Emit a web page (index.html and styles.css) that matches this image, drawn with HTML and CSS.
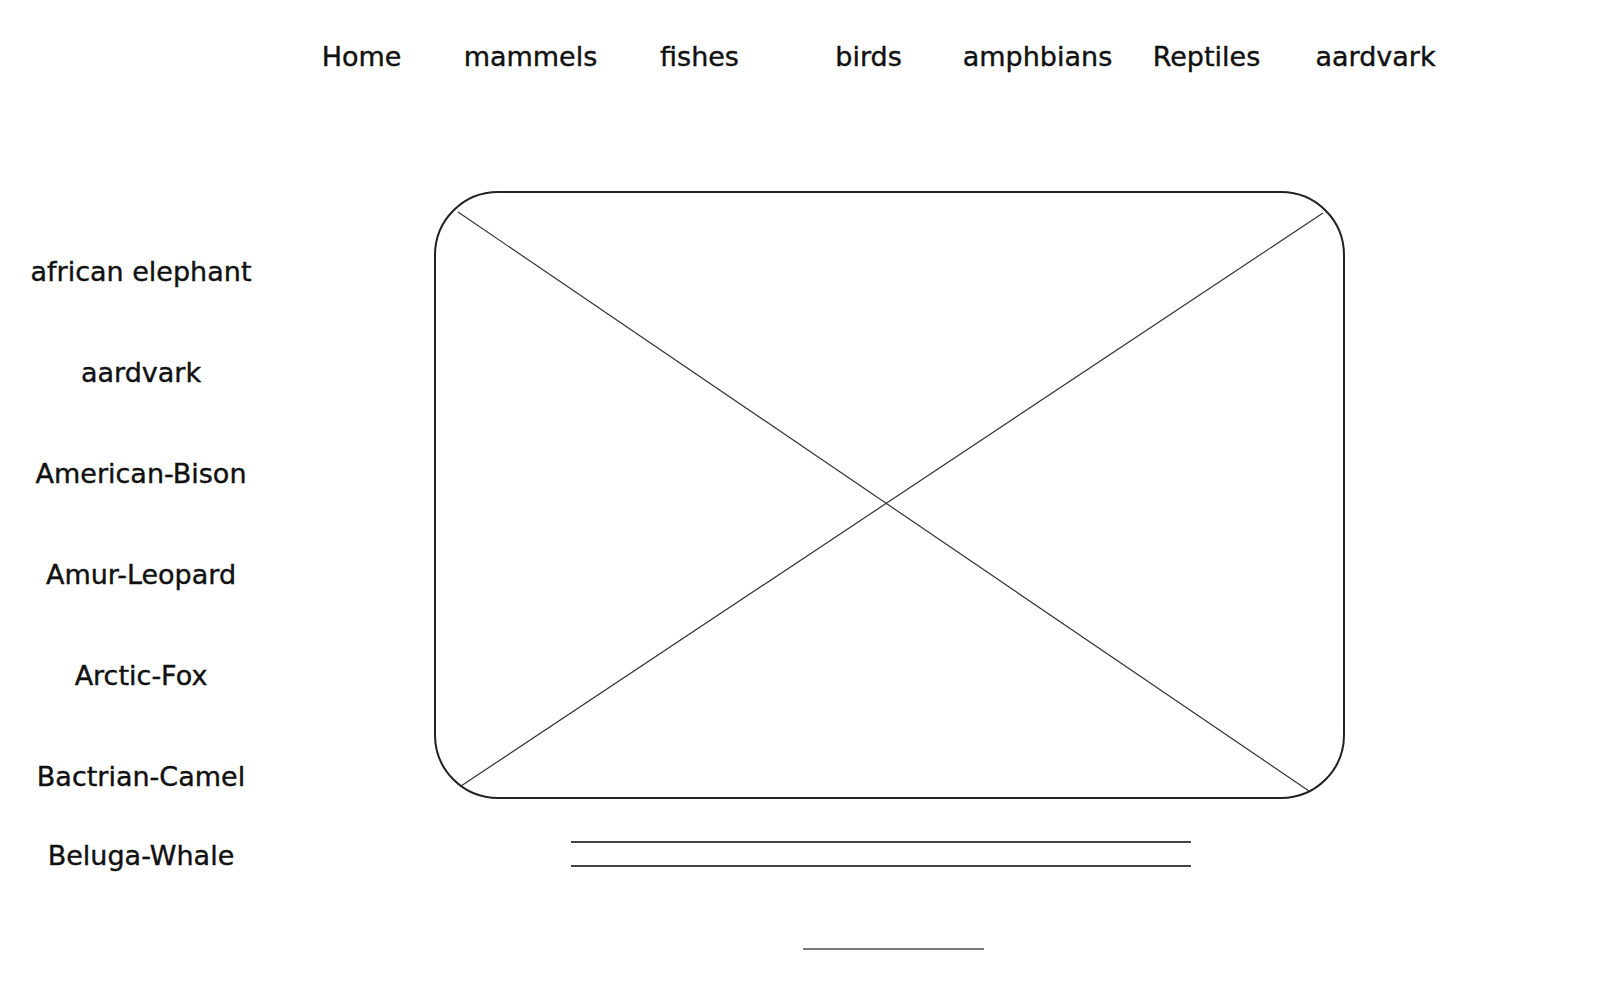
FILE: index.html
```html
<!doctype html>
<html lang="en">
    <head>
        <meta charset="UTF-8" />
        <meta name="viewport" content="width=device-width, initial-scale=1.0" />
        <title>Animals</title>
        <link rel="stylesheet" href="styles.css">
    </head>
    <body>
        <nav class="top-nav">
            <a href="#">Home</a>
            <a href="#">mammels</a>
            <a href="#">fishes</a>
            <a href="#">birds</a>
            <a href="#">amphbians</a>
            <a href="#">Reptiles</a>
            <a href="#">aardvark</a>
        </nav>
        <main class="layout">
            <ul class="animal-list">
                <li>african elephant</li>
                <li>aardvark</li>
                <li>American-Bison</li>
                <li>Amur-Leopard</li>
                <li>Arctic-Fox</li>
                <li>Bactrian-Camel</li>
                <li>Beluga-Whale</li>
            </ul>
            <section class="content">
                <div class="picture">
                    <svg class="cross" viewBox="0 0 907 604" preserveAspectRatio="none">
                        <line x1="22" y1="19" x2="873" y2="598" />
                        <line x1="25" y1="593" x2="887" y2="20" />
                    </svg>
                </div>
                <div class="text-line first"></div>
                <div class="text-line"></div>
                <div class="short-line"></div>
            </section>
        </main>
    </body>
</html>
```

FILE: styles.css
```css
body {
    font-family: "DejaVu Sans", Arial, sans-serif;
    margin: 0;
    padding: 0;
    background-color: #fff;
    color: #111;
}
.top-nav {
    display: flex;
    margin-left: 277px;
    height: 112px;
    align-items: center;
}
.top-nav a {
    width: 169px;
    text-align: center;
    font-size: 27px;
    color: #111;
    text-decoration: none;
    -webkit-text-stroke: 0.4px #111;
}
.layout {
    display: flex;
}
.animal-list {
    list-style: none;
    margin: 0;
    padding: 109px 0 0 0;
    width: 282px;
}
.animal-list li {
    height: 101px;
    line-height: 101px;
    text-align: center;
    font-size: 27px;
    -webkit-text-stroke: 0.4px #111;
}
.animal-list li:last-child {
    margin-top: -22px;
}
.content {
    display: flex;
    flex-direction: column;
    margin-left: 152px;
    padding-top: 79px;
}
.picture {
    position: relative;
    width: 907px;
    height: 604px;
    border: 2px solid #222;
    border-radius: 64px;
}
.cross {
    position: absolute;
    top: 0;
    left: 0;
    width: 100%;
    height: 100%;
}
.cross line {
    stroke: #333;
    stroke-width: 1.2;
}
.text-line {
    margin-left: 137px;
    width: 620px;
    height: 2px;
    background-color: #444;
    margin-top: 22px;
}
.text-line.first {
    margin-top: 42px;
}
.short-line {
    margin-left: 369px;
    width: 181px;
    height: 2px;
    background-color: #777;
    margin-top: 81px;
}
```
